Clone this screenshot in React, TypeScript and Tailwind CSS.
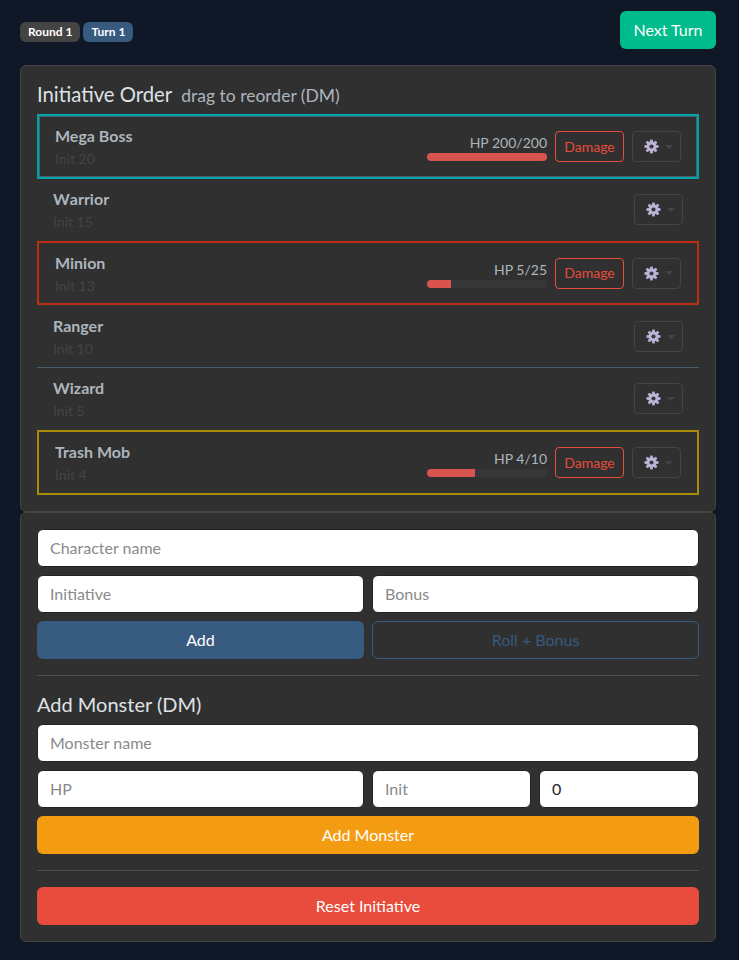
function GearIcon() {
  const teeth = [0, 45, 90, 135, 180, 225, 270, 315];
  return (
    <svg width="15" height="15" viewBox="0 0 15 15" className="shrink-0">
      {teeth.map((a) => (
        <rect key={a} x="6" y="0.4" width="3" height="3.4" rx="1" fill="#b5abd0" transform={`rotate(${a} 7.5 7.5)`} />
      ))}
      <circle cx="7.5" cy="7.5" r="4.9" fill="#bdb4d8" />
      <circle cx="7.5" cy="7.5" r="2.1" fill="#3a3640" />
    </svg>
  );
}

function Gear({ plain }: { plain: boolean }) {
  return (
    <button className={`flex h-[31px] w-[49px] shrink-0 items-center justify-center gap-[6px] rounded border border-[#444] pl-[3px] ${plain ? "mb-px" : ""}`}>
      <GearIcon />
      <span className="h-0 w-0 border-x-[4px] border-t-[4px] border-x-transparent border-t-[#444]" />
    </button>
  );
}

type Row = {
  name: string;
  init: number;
  hp?: string;
  pct?: number;
  style?: string;
  pad: string;
  left?: string;
  nameCls?: string;
};

const rows: Row[] = [
  { name: "Mega Boss", init: 20, hp: "HP 200/200", pct: 100, style: "border-2 border-[#00a5ab] shadow-[inset_0_0_0_1px_#4a5f6e]", pad: "h-[65px]" },
  { name: "Warrior", init: 15, pad: "h-[62px]", nameCls: "[font-kerning:none]" },
  { name: "Minion", init: 13, hp: "HP 5/25", pct: 20, style: "border-2 border-[#bd2c14]", pad: "h-[64px]", left: "pt-[2px]" },
  { name: "Ranger", init: 10, pad: "h-[62px] pt-[2px]" },
  { name: "Wizard", init: 5, style: "border-t border-[#4a5f6e]", pad: "h-[63px]" },
  { name: "Trash Mob", init: 4, hp: "HP 4/10", pct: 40, style: "border-2 border-[#a88a08]", pad: "h-[65px]" },
];

const inputCls =
  "h-[38px] w-full min-w-0 rounded-md border border-[#222] bg-white px-3 pb-[2px] text-base text-[#212529] placeholder:text-[#8a8a8a] outline-none";
const btnCls = "h-[38px] rounded-md text-base text-white";

export default function App() {
  return (
    <div className="min-h-[960px] bg-[#101828] pl-5 pr-[23px] pt-[11px] text-white [font-family:Lato,'Noto_Sans',sans-serif]">
      <div className="flex items-center justify-between">
        <div className="mt-[3px] flex gap-[3px]">
          <span className="flex h-5 items-center rounded-md bg-[#444] px-2 text-xs font-bold">Round 1</span>
          <span className="flex h-5 items-center rounded-md bg-[#375a7f] px-2 text-xs font-bold">Turn 1</span>
        </div>
        <button className="h-[38px] w-24 rounded-md bg-[#00bc8c] text-base text-white">Next Turn</button>
      </div>

      <section className="mt-4 rounded-md border border-[#444] bg-[#303030] px-4 pb-4 pt-4">
        <h2 className="-mt-px flex h-[33px] items-baseline gap-[9px] text-[20.3px] leading-[26px] text-[#dee2e6]">
          Initiative Order
          <small className="font-normal text-[#adb5bd] text-[17.5px]">drag to reorder (DM)</small>
        </h2>
        <div>
          {rows.map((r) => (
            <div key={r.name} className={`flex items-center justify-between px-4 ${r.pad} ${r.style ?? ""}`}>
              <div className={r.left ?? ""}>
                <div className={`text-base font-bold leading-6 text-[#adb5bd] ${r.nameCls ?? ""}`}>{r.name}</div>
                <div className="text-sm leading-[22px] text-[#444]">Init {r.init}</div>
              </div>
              <div className="flex items-center gap-2">
                {r.hp && (
                  <div className="w-[120px]">
                    <div className="text-right text-sm leading-[21px] text-[#adb5bd]">{r.hp}</div>
                    <div className="h-2 w-full overflow-hidden rounded-full bg-[#373737]">
                      <div className="h-full bg-[#d9534f]" style={{ width: `${r.pct}%` }} />
                    </div>
                  </div>
                )}
                {r.hp && (
                  <button className="h-[31px] w-[69px] rounded border border-[#e74c3c] text-sm text-[#e74c3c]">Damage</button>
                )}
                <Gear plain={!r.hp} />
              </div>
            </div>
          ))}
        </div>
      </section>

      <section className="rounded-md border border-[#444] bg-[#303030] p-4">
        <div className="flex flex-col gap-2">
          <input className={inputCls} placeholder="Character name" />
          <div className="grid grid-cols-2 gap-2">
            <input className={inputCls} placeholder="Initiative" />
            <input className={inputCls} placeholder="Bonus" />
          </div>
          <div className="grid grid-cols-2 gap-2">
            <button className={`${btnCls} bg-[#375a7f]`}>Add</button>
            <button className="h-[38px] rounded-md border border-[#375a7f] text-base text-[#375a7f]">Roll + Bonus</button>
          </div>
        </div>
        <hr className="my-4 border-[#4d4d4d]" />
        <h3 className="mb-2 text-xl leading-6 text-[#dee2e6]">Add Monster (DM)</h3>
        <div className="flex flex-col gap-2">
          <input className={inputCls} placeholder="Monster name" />
          <div className="grid grid-cols-[327px_159px_1fr] gap-2">
            <input className={inputCls} placeholder="HP" />
            <input className={inputCls} placeholder="Init" />
            <input className={inputCls} defaultValue="0" />
          </div>
          <button className={`${btnCls} bg-[#f39c12]`}>Add Monster</button>
        </div>
        <hr className="my-4 border-[#4d4d4d]" />
        <button className={`${btnCls} w-full bg-[#e74c3c]`}>Reset Initiative</button>
      </section>
    </div>
  );
}
